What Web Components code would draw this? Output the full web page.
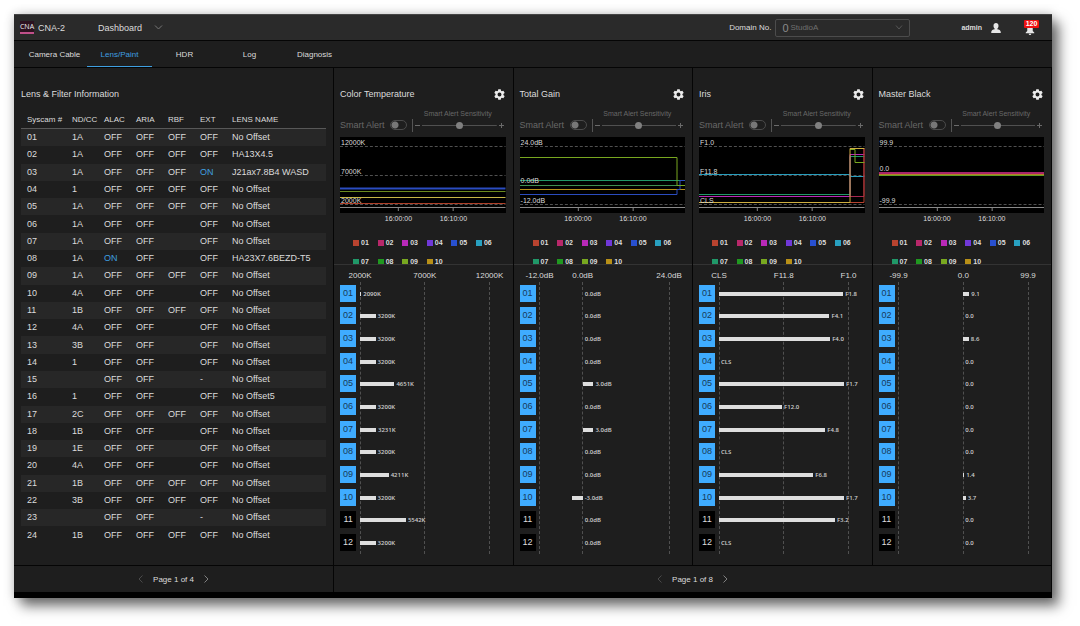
<!DOCTYPE html>
<html lang="en">
<head>
<meta charset="utf-8">
<meta name="viewport" content="width=device-width, initial-scale=1">
<title>CNA-2 Dashboard</title>
<style>
  html { background: #fff; }
  body {
    margin: 0;
    box-sizing: border-box;
    min-height: 100vh;
    padding: 14px 28px 28px 14px;
    display: flex;
    font-family: "Liberation Sans", Arial, sans-serif;
    font-size: 9px;
    color: #dcdcdc;
  }
  cna-app { flex: 1; min-width: 0; }
</style>
</head>
<body>
<cna-app></cna-app>

<script>
const esc = s => String(s).replace(/&/g, '&amp;').replace(/</g, '&lt;');

class CnaElement extends HTMLElement {
  connectedCallback() {
    if (this.shadowRoot) return;
    this.attachShadow({ mode: 'open' }).innerHTML =
      `<style>*{box-sizing:border-box}button{font:inherit;color:inherit;background:none;border:0;padding:0;margin:0;cursor:pointer}svg{display:block}${this.css()}</style>${this.html()}`;
  }
  css() { return ''; }
  html() { return '<slot></slot>'; }
}

/* Top bar: brand, view menu, domain choice, user and alarms */
customElements.define('cna-header', class extends CnaElement {
  css() { return `
    :host { display: flex; align-items: center; height: 27px; padding: 0 13px 0 6px;
      background: #2a2a2a; border-top: 1px solid #444; border-bottom: 1px solid #050505; }
    .logo { width: 14px; height: 13px; background: #2c1220; border-bottom: 2px solid #c0508a;
      color: #f2f2f2; font: 7px/11px "Open Sans", sans-serif; text-align: center; display: flex; justify-content: center; }
    .brand { margin-left: 4px; width: 60px; }
    .menu { display: flex; align-items: center; gap: 12px; }
    .menu svg { width: 9px; height: 5px; }
    .grow { flex: 1; }
    .domain { font-size: 8px; margin-right: 4px; }
    .field { display: flex; align-items: center; width: 135px; height: 18px; padding: 0 6px;
      border: 1px solid #4c4c4c; border-radius: 2px; color: #707070; margin-right: 51px; }
    .field span { font-size: 11px; width: 8px; color: #8a8a8a; }
    select { flex: 1; min-width: 0; appearance: none; background: none; border: 0; padding: 0; margin: 0;
      font: 8px "Liberation Sans", Arial, sans-serif; color: #707070; }
    .field svg { width: 8px; height: 5px; }
    .user { display: flex; align-items: center; gap: 9px; font-size: 7px; font-weight: 700; }
    .user svg { width: 10px; height: 10px; }
    .bell { position: relative; margin-left: 23px; width: 15px; height: 14px; }
    .bell svg { width: 10px; height: 10px; margin: 4px 0 0 1px; }
    .count { position: absolute; left: 0; top: -1px; width: 15px; height: 8px; border-radius: 1px;
      background: #ee1111; color: #fff; font-size: 7px; line-height: 8px; font-weight: 700; text-align: center; }
  `; }
  html() { return `
    <div class="logo">CNA</div><div class="brand">CNA-2</div>
    <button class="menu">Dashboard
      <svg viewBox="0 0 9 5" fill="none" stroke="#777" ><path d="M1 .5 4.500 4 8 .5"/></svg></button>
    <div class="grow"></div>
    <label class="domain" for="domain">Domain No.</label>
    <div class="field"><span>0</span><select id="domain"><option>StudioA</option></select>
      <svg viewBox="0 0 8 5" fill="none" stroke="#555"><path d="M1 .5 4 4 7 .5"/></svg></div>
    <button class="user">admin
      <svg viewBox="0 0 20 20" fill="#e6e6e6"><path d="M10 0c3 0 5 2.200 5 5.500 0 2.600-1 4.700-2.500 5.800v1.200c3.500.8 7 2 7 5.500v2H.5v-2c0-3.500 3.500-4.700 7-5.500v-1.200C6 10.200 5 8.100 5 5.500 5 2.200 7 0 10 0z"/></svg></button>
    <button class="bell" aria-label="Alarms"><svg viewBox="0 0 20 20" fill="#e6e6e6"><path d="M10 0c-4 1-5.500 4-5.500 7v5L1.500 15v1.500h17V15l-3-3V7c0-3-1.500-6-5.500-7zM7.500 17.500h5c0 1.400-1.100 2.500-2.500 2.500s-2.500-1.100-2.500-2.500z"/></svg>
      <span class="count">120</span></button>`; }
});

customElements.define('cna-tabs', class extends CnaElement {
  css() { return `
    :host { display: block; background: #1e1e1e; border-bottom: 1px solid #050505; }
    nav { display: flex; height: 26px; padding-left: 8px; }
    a { width: 65px; display: flex; align-items: center; justify-content: center; font-size: 8px; padding-top: 1px;
      color: inherit; text-decoration: none; border-bottom: 1px solid transparent; white-space: nowrap; }
    a[aria-current] { color: #3f9fe0; border-color: #3f9fe0; }
  `; }
  html() {
    const on = this.getAttribute('active');
    return `<nav>${this.getAttribute('items').split(',').map(t =>
      `<a href="#"${t === on ? ' aria-current="page"' : ''}>${t}</a>`).join('')}</nav>`;
  }
});

customElements.define('cna-pager', class extends CnaElement {
  css() { return `
    :host { display: flex; align-items: center; justify-content: center; gap: 10px; height: 26px; font-size: 8px; }
    svg { width: 5px; height: 8px; }
    button:disabled { opacity: .45; }
  `; }
  html() { return `
    <button disabled aria-label="Previous page"><svg viewBox="0 0 5 8" fill="none" stroke="#808080"><path d="M4.500 .5 1 4l3.500 3.500"/></svg></button>
    <span><slot></slot></span>
    <button aria-label="Next page"><svg viewBox="0 0 5 8" fill="none" stroke="#808080"><path d="M.5 .5 4 4 .5 7.500"/></svg></button>`; }
});

const LENSES = [
  ['1A','OFF','OFF','OFF','OFF','No Offset'], ['1A','OFF','OFF','OFF','OFF','HA13X4.5'],
  ['1A','OFF','OFF','OFF','ON','J21ax7.8B4 WASD'], ['1','OFF','OFF','OFF','OFF','No Offset'],
  ['1A','OFF','OFF','OFF','OFF','No Offset'], ['1A','OFF','OFF','','OFF','No Offset'],
  ['1A','OFF','OFF','','OFF','No Offset'], ['1A','ON','OFF','','OFF','HA23X7.6BEZD-T5'],
  ['1A','OFF','OFF','OFF','OFF','No Offset'], ['4A','OFF','OFF','','OFF','No Offset'],
  ['1B','OFF','OFF','OFF','OFF','No Offset'], ['4A','OFF','OFF','','OFF','No Offset'],
  ['3B','OFF','OFF','','OFF','No Offset'], ['1','OFF','OFF','','OFF','No Offset'],
  ['','OFF','OFF','','-','No Offset'], ['1','OFF','OFF','','OFF','No Offset5'],
  ['2C','OFF','OFF','OFF','OFF','No Offset'], ['1B','OFF','OFF','','OFF','No Offset'],
  ['1E','OFF','OFF','','OFF','No Offset'], ['4A','OFF','OFF','','OFF','No Offset'],
  ['1B','OFF','OFF','OFF','OFF','No Offset'], ['3B','OFF','OFF','OFF','OFF','No Offset'],
  ['','OFF','OFF','','-','No Offset'], ['1B','OFF','OFF','OFF','OFF','No Offset'],
];

customElements.define('cna-lens-table', class extends CnaElement {
  css() { return `
    :host { display: flex; flex-direction: column; padding: 20px 7px 21px; }
    h2 { margin: 0 0 9px; font-size: 9px; line-height: 13px; font-weight: 400; }
    .fill { flex: 1; display: grid; }
    table { width: 100%; height: 100%; border-spacing: 0; table-layout: fixed; }
    th, td { padding: 0 0 1px; text-align: left; font-weight: 400; line-height: 10px; white-space: nowrap; }
    th:first-child, td:first-child { padding-left: 6px; }
    thead th { height: 19px; padding: 2px 0 0; font-size: 8px; border-bottom: 1px solid #585858; }
    .id { width: 51px; } .flag { width: 32px; }
    tbody tr:nth-child(odd) { background: #272727; }
    .on { color: #3f9fe0; }
  `; }
  html() { return `
    <h2>Lens &amp; Filter Information</h2>
    <div class="fill"><table>
      <colgroup><col class="id"><col class="flag" span="5"><col></colgroup>
      <thead><tr>${['Syscam #','ND/CC','ALAC','ARIA','RBF','EXT','LENS NAME'].map(h => `<th scope="col">${h}</th>`).join('')}</tr></thead>
      <tbody>${LENSES.map((r, i) => `<tr><td>${String(i + 1).padStart(2, '0')}</td>${r.map(c =>
        `<td${c === 'ON' ? ' class="on"' : ''}>${c}</td>`).join('')}</tr>`).join('')}</tbody>
    </table></div>`; }
});

/* A row of marks at given percentages: "0:2000K|50:7000K|100:12000K".
   With the attribute "lines" it draws dashed vertical lines in place of labels. */
customElements.define('cna-ruler', class extends CnaElement {
  css() { return `
    :host { display: flex; align-items: center; }
    :host([lines]) { align-items: stretch; }
    i { width: 0; display: flex; justify-content: center; font-style: normal; white-space: nowrap; }
    b { width: 0; border-left: 1px dashed #505050; }
  `; }
  html() {
    let at = 0, out = '';
    for (const t of this.getAttribute('ticks').split('|')) {
      const k = t.indexOf(':'), p = +t.slice(0, k);
      out += `<s style="flex:${p - at} 0 0px"></s>` + `<i>${this.hasAttribute('lines') ? '<b></b>' : esc(t.slice(k + 1))}</i>`;
      at = p;
    }
    return out + `<s style="flex:${100 - at} 0 0px"></s>`;
  }
});

const COLORS = ['#b8432f','#b8286a','#b829b8','#7038d8','#2850d0','#28a0c0','#209868','#209820','#78a820','#b89018'];

customElements.define('cna-legend', class extends CnaElement {
  css() { return `
    :host { display: grid; grid-template-columns: repeat(6, 1fr); row-gap: 12px;
      font-size: 7px; font-weight: 700; line-height: 7px; }
    span { display: flex; align-items: center; gap: 2px; }
    i { width: 6px; height: 6px; }
  `; }
  html() { return COLORS.map((c, i) => `<span><i style="background:${c}"></i>${String(i + 1).padStart(2, '0')}</span>`).join(''); }
});

const METRICS = {
  color: {
    title: 'Color Temperature', y: [['12000K', 5, 9], ['7000K', 34, 38], ['2000K', 63, 67]],
    trend: [['#2a4cc0', 'M0 51.500H166', 2], ['#6a8a20', 'M0 54.500H166'], ['#c8b848', 'M0 60.500H166'], ['#b04028', 'M0 66.500H166']],
    ticks: '0:2000K|50:7000K|100:12000K', zero: 0,
    bars: [[.9,'2090K'],[12,'3200K'],[12,'3200K'],[12,'3200K'],[26.5,'4651K'],[12,'3200K'],[12.3,'3231K'],[12,'3200K'],[22.1,'4211K'],[12,'3200K'],[35.4,'5542K'],[12,'3200K']],
  },
  gain: {
    title: 'Total Gain', y: [['24.0dB', 5, 9], ['0.0dB', 43, 48], ['-12.0dB', 63, 67]],
    trend: [['#209868', 'M0 43.500H166'], ['#3f8f50', 'M0 48.500H166'], ['#b89018', 'M0 52.500H166'],
      ['#2a4cc0', 'M0 57.500H157.500V52.500H160.500V43.500H166'], ['#78a820', 'M0 20.500H157.500V48.500H166']],
    ticks: '0:-12.0dB|33.33:0.0dB|100:24.0dB', zero: 33.33,
    bars: [[0,'0.0dB'],[0,'0.0dB'],[0,'0.0dB'],[0,'0.0dB'],[8.3,'3.0dB'],[0,'0.0dB'],[8.3,'3.0dB'],[0,'0.0dB'],[0,'0.0dB'],[-8.3,'-3.0dB'],[0,'0.0dB'],[0,'0.0dB']],
  },
  iris: {
    title: 'Iris', y: [['F1.0', 5, 9], ['F11.8', 34, 38], ['CLS', 63, 67]],
    trend: [['#28a0c0', 'M0 37.500H151.500V39.500H166'], ['#209868', 'M0 57.500H151.500V19.500H166'],
      ['#b829b8', 'M0 59.500H151.500V17.500H166'], ['#a82850', 'M151 59.500H165.500V11.500'], ['#b84330', 'M151 65.500H165.500V12'],
      ['#78a820', 'M151.500 12.500H156.500V25.500H166'], ['#d0b040', 'M0 65.500H151.500V11.500H166']],
    ticks: '0:CLS|50:F11.8|100:F1.0', zero: 0,
    bars: [[96,'F1.8'],[85.3,'F4.1'],[85.8,'F4.0'],[0,'CLS'],[96.5,'F1.7'],[48.7,'F12.0'],[82.1,'F4.8'],[0,'CLS'],[72.8,'F6.8'],[96.5,'F1.7'],[89.5,'F3.2'],[0,'CLS']],
  },
  black: {
    title: 'Master Black', y: [['99.9', 5, 9], ['0.0', 31, 38], ['-99.9', 63, 67]],
    trend: [['#a8246a', 'M0 36H166', 2], ['#b88028', 'M0 37.500H166'], ['#60a020', 'M0 38.500H166']],
    ticks: '0:-99.9|50:0.0|100:99.9', zero: 50,
    bars: [[4.6,'9.1'],[0,'0.0'],[4.3,'8.6'],[0,'0.0'],[0,'0.0'],[0,'0.0'],[0,'0.0'],[0,'0.0'],[.7,'1.4'],[1.9,'3.7'],[0,'0.0'],[0,'0.0']],
  },
};

customElements.define('cna-trend', class extends CnaElement {
  css() { return `
    :host { display: block; }
    .plot { position: relative; height: 76px; background: #000; }
    .plot svg { width: 100%; height: 100%; }
    .plot span { position: absolute; left: 1px; transform: translateY(-50%); font-size: 7px; line-height: 7px; }
    cna-ruler { height: 11px; font-size: 7px; }
  `; }
  html() {
    const m = METRICS[this.getAttribute('metric')];
    return `<div class="plot"><svg viewBox="0 0 166 76" preserveAspectRatio="none" fill="none">
      ${m.y.map(([, , l]) => `<path d="M0 ${l}.5H166" stroke="#505050" stroke-dasharray="3 2"/>`).join('')}
      ${m.trend.map(([c, d, w]) => `<path d="${d}" stroke="${c}" stroke-width="${w || 1}"/>`).join('')}
      <path d="M0 70.500H166M58.500 71v3M113.500 71v3" stroke="#8a8a8a"/></svg>
      ${m.y.map(([t, c]) => `<span style="top:${c}px">${t}</span>`).join('')}</div>
      <cna-ruler ticks="35.3:16:00:00|68.5:16:10:00"></cna-ruler>`;
  }
});

/* Bars of the cameras; each one grows from the zero mark of the scale */
customElements.define('cna-bars', class extends CnaElement {
  css() { return `
    :host { display: flex; flex-direction: column; }
    .scale { height: 17px; padding-top: 4px; margin: 0 16px 0 20px; font-size: 8px; }
    .plot { flex: 1; display: grid; }
    .lines, .rows { grid-area: 1 / 1; }
    .lines { margin: 0 16px 0 20px; }
    .rows { display: grid; grid-auto-rows: 1fr; }
    .row { display: flex; align-items: center; gap: 4px; }
    .cam { width: 16px; height: 17px; background: #3facff; color: #173a5a; text-align: center; line-height: 17px; }
    .cam.off { background: #000; color: #dcdcdc; }
    .track { flex: 1; margin-right: 16px; display: flex; align-items: center; padding-top: 1px; }
    .track > * { flex: none; }
    .bar { height: 4px; background: #dedede; }
    .val { width: 0; white-space: nowrap; text-indent: 2px; font: 600 6px/8px "Open Sans", sans-serif; color: #cfcfcf; }
  `; }
  html() {
    const m = METRICS[this.getAttribute('metric')];
    return `<cna-ruler class="scale" ticks="${m.ticks}"></cna-ruler>
      <div class="plot"><cna-ruler class="lines" lines ticks="${m.ticks}"></cna-ruler>
      <div class="rows">${m.bars.map(([v, t], i) => `<div class="row">
        <div class="cam${i > 9 ? ' off' : ''}">${String(i + 1).padStart(2, '0')}</div>
        <div class="track"><i style="width:${m.zero + Math.min(v, 0)}%"></i><div class="bar" style="width:${Math.abs(v)}%"></div><div class="val">${t}</div></div>
      </div>`).join('')}</div></div>`;
  }
});

customElements.define('cna-smart-alert', class extends CnaElement {
  css() { return `
    :host { display: flex; align-items: flex-end; height: 23px; color: #686868; padding-right: 2px; }
    .name { width: 50px; line-height: 13px; white-space: nowrap; }
    .toggle { appearance: none; width: 17px; height: 10px; margin: 0 5px 2px 0; border: 1px solid #4a4a4a; border-radius: 5px;
      background: radial-gradient(circle at 4px 4px, #777 3px, transparent 4px); }
    .sense { flex: 1; min-width: 0; display: flex; flex-direction: column; border: 0; }
    .sense label { text-align: center; font-size: 7px; line-height: 10px; height: 10px; white-space: nowrap; color: #686868; }
    .line { display: flex; align-items: center; gap: 2px; height: 13px; border-left: 1px solid #555; padding-left: 2px; }
    .line svg { width: 5px; height: 5px; }
    input[type=range] { appearance: none; flex: 1; min-width: 0; margin: 0; height: 7px; background: linear-gradient(#505050, #505050) center / 100% 1px no-repeat; }
    input[type=range]::-webkit-slider-thumb { appearance: none; width: 7px; height: 7px; border-radius: 50%; background: #808080; }
  `; }
  html() { return `
    <label class="name" for="on">Smart Alert</label><input class="toggle" id="on" type="checkbox">
    <div class="sense"><label for="level">Smart Alert Sensitivity</label>
      <div class="line">
        <button aria-label="Less"><svg viewBox="0 0 5 5" stroke="#6a6a6a"><path d="M0 2.500h5"/></svg></button>
        <input id="level" type="range" value="50">
        <button aria-label="More"><svg viewBox="0 0 5 5" stroke="#6a6a6a"><path d="M0 2.500h5M2.500 0v5"/></svg></button>
      </div></div>`; }
});

customElements.define('cna-metric', class extends CnaElement {
  css() { return `
    :host { display: flex; flex-direction: column; border-left: 1px solid #050505; padding-bottom: 11px; }
    header { display: flex; align-items: center; justify-content: space-between; height: 13px; margin: 20px 8px 8px 6px; }
    h2 { margin: 0; font-size: 9px; line-height: 13px; font-weight: 400; }
    header svg { width: 11px; height: 11px; }
    cna-smart-alert, cna-trend, cna-bars { margin: 0 7px 0 6px; }
    cna-trend { margin-top: 5px; }
    cna-legend { margin: 15px 12px -1px 19px; }
    hr { width: 100%; margin: 0; border: 0; height: 1px; background: #333; }
    cna-bars { flex: 1; }
  `; }
  html() {
    const k = this.getAttribute('metric');
    return `<header><h2>${METRICS[k].title}</h2><button aria-label="Settings">
      <svg viewBox="2 2 20 20" fill="#ececec"><path d="M19.140 12.940c.04-.3.060-.61.060-.94s-.020-.64-.070-.94l2.030-1.580a.49.49 0 0 0 .12-.61l-1.920-3.320a.488.488 0 0 0-.59-.22l-2.390.96a7.020 7.020 0 0 0-1.620-.94l-.36-2.540a.484.484 0 0 0-.48-.41h-3.840c-.24 0-.43.17-.47.41l-.36 2.540c-.59.24-1.130.57-1.620.94l-2.390-.96a.475.475 0 0 0-.59.22L2.740 8.870a.47.47 0 0 0 .12.61l2.030 1.580c-.050.3-.090.63-.090.94s.020.64.070.94l-2.030 1.580a.49.49 0 0 0-.12.61l1.920 3.320c.12.22.37.29.59.22l2.390-.96c.5.38 1.030.7 1.620.94l.36 2.540c.050.24.24.41.48.41h3.840c.24 0 .44-.17.47-.41l.36-2.540c.59-.24 1.130-.56 1.620-.94l2.390.96c.22.080.47 0 .59-.22l1.920-3.320a.47.47 0 0 0-.12-.61l-2.010-1.580zM12 15.600A3.600 3.600 0 1 1 12 8.400a3.600 3.600 0 0 1 0 7.200z"/></svg></button></header>
      <cna-smart-alert></cna-smart-alert>
      <cna-trend metric="${k}"></cna-trend>
      <cna-legend></cna-legend><hr>
      <cna-bars metric="${k}"></cna-bars>`;
  }
});

customElements.define('cna-app', class extends CnaElement {
  css() { return `
    :host { display: flex; flex-direction: column; background: #1e1e1e; border-bottom: 6px solid #000;
      box-shadow: 0 0 10px rgba(0,0,0,.2), 7px 8px 12px rgba(0,0,0,.55); }
    main, footer { display: grid; grid-template-columns: 4fr 9fr; }
    main { flex: 1; border-right: 1px solid #050505; }
    .metrics { display: grid; grid-template-columns: repeat(4, minmax(0, 1fr)); }
    footer { border-top: 1px solid #050505; border-right: 1px solid #050505; }
    footer > :last-child { border-left: 1px solid #050505; }
  `; }
  html() { return `
    <cna-header></cna-header>
    <cna-tabs items="Camera Cable,Lens/Paint,HDR,Log,Diagnosis" active="Lens/Paint"></cna-tabs>
    <main><cna-lens-table></cna-lens-table>
      <section class="metrics">${Object.keys(METRICS).map(k => `<cna-metric metric="${k}"></cna-metric>`).join('')}</section></main>
    <footer><cna-pager>Page 1 of 4</cna-pager><cna-pager>Page 1 of 8</cna-pager></footer>`; }
});
</script>
</body>
</html>
